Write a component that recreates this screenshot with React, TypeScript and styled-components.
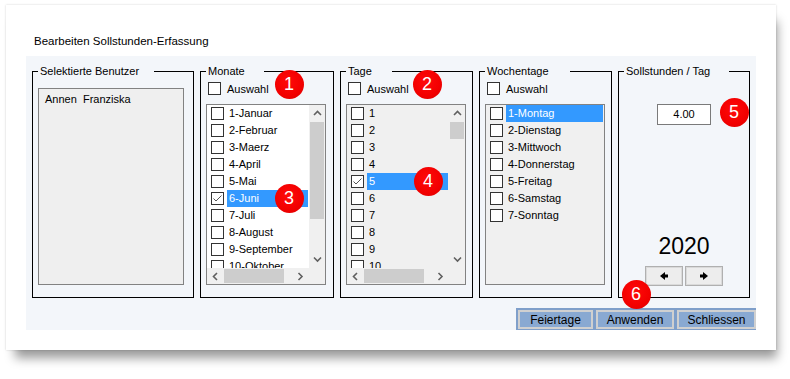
import React from "react";
import styled, { createGlobalStyle } from "styled-components";

const GlobalStyle = createGlobalStyle`
  body {
    margin: 0;
    background: #fff;
    font-family: "Liberation Sans", Arial, sans-serif;
    color: #000;
  }
`;

const Page = styled.div`
  width: 790px;
  height: 379px;
  padding: 5px 0 0 6px;
  box-sizing: border-box;
  overflow: hidden;
`;

const Card = styled.div`
  position: relative;
  width: 770px;
  height: 345px;
  background: #fff;
  box-sizing: border-box;
  padding: 29px 0 0 20px;
  box-shadow: 0 0 2px rgba(0, 0, 0, 0.18), 5px 12px 10px -4px rgba(0, 0, 0, 0.4);
`;

const Title = styled.div`
  font-size: 11.5px;
  line-height: 14px;
  height: 14px;
  padding-left: 8px;
  margin-bottom: 8px;
`;

const Panel = styled.div`
  width: 730px;
  height: 274px;
  background: #f3f6fa;
  box-sizing: border-box;
  padding: 8px 0 0 6px;
  display: flex;
  flex-direction: column;
`;

const Groups = styled.div`
  display: flex;
  gap: 6px;
  height: 234px;
`;

const Group = styled.fieldset<{ $w: number }>`
  width: ${(p) => p.$w}px;
  height: 234px;
  box-sizing: border-box;
  margin: 0;
  min-width: 0;
  padding: 0 5px;
  border: 1px solid #000;
  display: flex;
  flex-direction: column;
`;

const Legend = styled.legend<{ $gap: number }>`
  font-size: 11px;
  line-height: 14px;
  padding: 0 ${(p) => p.$gap}px 0 2px;
`;

const SelectRow = styled.label`
  display: flex;
  align-items: center;
  gap: 6px;
  height: 13px;
  margin: 4px 0 9px 2px;
  font-size: 11px;
`;

const Box = styled.span`
  width: 13px;
  height: 13px;
  flex: none;
  box-sizing: border-box;
  border: 1px solid #333;
  background: #fff;
  display: inline-flex;
  align-items: center;
  justify-content: center;
`;

const UserList = styled.div`
  margin-top: 10px;
  width: 146px;
  height: 197px;
  box-sizing: border-box;
  border: 1px solid #828282;
  background: #efefef;
  font-size: 11px;
  padding: 4px 6px;
  white-space: pre;
`;

const ListBox = styled.div<{ $bg: string; $scroll: boolean }>`
  width: 120px;
  height: 181px;
  box-sizing: border-box;
  border: 1px solid #828282;
  background: ${(p) => p.$bg};
  display: grid;
  grid-template-columns: ${(p) => (p.$scroll ? "1fr 16px" : "1fr")};
  grid-template-rows: ${(p) => (p.$scroll ? "1fr 16px" : "1fr")};
  overflow: hidden;
`;

const Items = styled.div`
  overflow: hidden;
  min-height: 0;
`;

const Row = styled.div`
  display: flex;
  align-items: center;
  height: 17px;
  padding-left: 4px;
  font-size: 11px;
`;

const ItemText = styled.span<{ $sel?: boolean }>`
  flex: 1;
  height: 17px;
  line-height: 17px;
  margin: 0 1px 0 3px;
  padding-left: 2px;
  white-space: nowrap;
  background: ${(p) => (p.$sel ? "#3399ff" : "transparent")};
  color: ${(p) => (p.$sel ? "#fff" : "#000")};
`;

const VBar = styled.div`
  background: #f0f0f0;
  display: flex;
  flex-direction: column;
`;

const HBar = styled.div`
  background: #f0f0f0;
  display: flex;
`;

const ArrowCell = styled.div`
  width: 16px;
  height: 17px;
  flex: none;
  display: flex;
  align-items: center;
  justify-content: center;
`;

const HArrowCell = styled(ArrowCell)`
  width: 17px;
  height: 16px;
`;

const Track = styled.div`
  flex: 1;
  display: flex;
  flex-direction: column;
`;

const HTrack = styled.div`
  flex: 1;
  display: flex;
`;

const Thumb = styled.div<{ $len: number }>`
  background: #cdcdcd;
  height: ${(p) => p.$len}px;
  margin: 0 1px;
`;

const HThumb = styled.div<{ $len: number }>`
  background: #cdcdcd;
  width: ${(p) => p.$len}px;
  margin: 1px 0;
`;

const Corner = styled.div`
  background: #f0f0f0;
`;

const HoursBody = styled.div`
  flex: 1;
  display: flex;
  flex-direction: column;
  align-items: center;
  padding-bottom: 11px;
`;

const HoursInput = styled.div`
  margin-top: 26px;
  width: 54px;
  height: 21px;
  box-sizing: border-box;
  border: 1px solid #7a7a7a;
  background: #fff;
  font-size: 11px;
  line-height: 19px;
  text-align: center;
`;

const Year = styled.div`
  margin-top: auto;
  font-size: 23px;
  line-height: 26px;
  margin-bottom: 7px;
`;

const StepRow = styled.div`
  display: flex;
  gap: 2px;
`;

const StepButton = styled.button`
  width: 38px;
  height: 20px;
  box-sizing: border-box;
  border: 1px solid #b0b0b0;
  box-shadow: inset 0 0 0 1px #dadada;
  background: #ededed;
  padding: 0;
  display: flex;
  align-items: center;
  justify-content: center;
`;

const Footer = styled.div`
  margin-top: 10px;
  align-self: flex-end;
  display: flex;
  gap: 3px;
  height: 22px;
  box-sizing: border-box;
  padding: 2px 0 1px 2px;
  background: #7f9fca;
`;

const ActionButton = styled.button<{ $w: number }>`
  width: ${(p) => p.$w}px;
  height: 19px;
  box-sizing: border-box;
  border: 2px solid #d0d0d0;
  background: #89a9d2;
  font-family: "Liberation Sans", Arial, sans-serif;
  font-size: 12px;
  color: #000;
  padding: 0;
`;

const Badge = styled.div<{ $x: number; $y: number }>`
  position: absolute;
  left: ${(p) => p.$x}px;
  top: ${(p) => p.$y}px;
  width: 29px;
  height: 29px;
  border-radius: 50%;
  background: radial-gradient(circle at 45% 40%, #ff0a0a 0%, #f20000 60%, #d80000 100%);
  color: #fff;
  font-size: 18px;
  line-height: 29px;
  text-align: center;
`;

const Check = () => (
  <svg width="11" height="11" viewBox="0 0 11 11">
    <polyline points="1.5,5.5 4,8 9.5,2.5" fill="none" stroke="#555" strokeWidth="1" />
  </svg>
);

const Chevron = ({ dir }: { dir: "up" | "down" | "left" | "right" }) => {
  const pts = {
    up: "1,5 4.5,1.5 8,5",
    down: "1,1.5 4.5,5 8,1.5",
    left: "5,1 1.5,4.5 5,8",
    right: "1.5,1 5,4.5 1.5,8",
  }[dir];
  const horiz = dir === "left" || dir === "right";
  return (
    <svg width={horiz ? 7 : 9} height={horiz ? 9 : 7} viewBox={horiz ? "0 0 7 9" : "0 0 9 7"}>
      <polyline points={pts} fill="none" stroke="#606060" strokeWidth="1.6" />
    </svg>
  );
};

const StepArrow = ({ left }: { left?: boolean }) => (
  <svg width="8" height="8" viewBox="0 0 8 8">
    <polygon
      points={left ? "0,4 5,0 5,2.5 8,2.5 8,5.5 5,5.5 5,8" : "8,4 3,0 3,2.5 0,2.5 0,5.5 3,5.5 3,8"}
      fill="#000"
    />
  </svg>
);

type Item = { label: string; checked?: boolean; sel?: boolean };

const CheckList = ({
  items,
  bg,
  scroll,
  vThumb,
  hThumb,
}: {
  items: Item[];
  bg: string;
  scroll?: boolean;
  vThumb?: number;
  hThumb?: number;
}) => (
  <ListBox $bg={bg} $scroll={!!scroll}>
    <Items>
      {items.map((it) => (
        <Row key={it.label}>
          <Box>{it.checked && <Check />}</Box>
          <ItemText $sel={it.sel}>{it.label}</ItemText>
        </Row>
      ))}
    </Items>
    {scroll && (
      <>
        <VBar>
          <ArrowCell>
            <Chevron dir="up" />
          </ArrowCell>
          <Track>
            <Thumb $len={vThumb ?? 20} />
          </Track>
          <ArrowCell>
            <Chevron dir="down" />
          </ArrowCell>
        </VBar>
        <HBar>
          <HArrowCell>
            <Chevron dir="left" />
          </HArrowCell>
          <HTrack>
            <HThumb $len={hThumb ?? 60} />
          </HTrack>
          <HArrowCell>
            <Chevron dir="right" />
          </HArrowCell>
        </HBar>
        <Corner />
      </>
    )}
  </ListBox>
);

const months: Item[] = [
  "1-Januar",
  "2-Februar",
  "3-Maerz",
  "4-April",
  "5-Mai",
  "6-Juni",
  "7-Juli",
  "8-August",
  "9-September",
  "10-Oktober",
].map((m) => ({ label: m, checked: m === "6-Juni", sel: m === "6-Juni" }));

const days: Item[] = Array.from({ length: 10 }, (_, i) => ({
  label: String(i + 1),
  checked: i === 4,
  sel: i === 4,
}));

const weekdays: Item[] = [
  "1-Montag",
  "2-Dienstag",
  "3-Mittwoch",
  "4-Donnerstag",
  "5-Freitag",
  "6-Samstag",
  "7-Sonntag",
].map((d, i) => ({ label: d, sel: i === 0 }));

export default function App() {
  return (
    <>
      <GlobalStyle />
      <Page>
        <Card>
          <Title>Bearbeiten Sollstunden-Erfassung</Title>
          <Panel>
            <Groups>
              <Group $w={162}>
                <Legend $gap={15}>Selektierte Benutzer</Legend>
                <UserList>Annen  Franziska</UserList>
              </Group>
              <Group $w={134}>
                <Legend $gap={19}>Monate</Legend>
                <SelectRow>
                  <Box />
                  Auswahl
                </SelectRow>
                <CheckList items={months} bg="#fff" scroll vThumb={97} hThumb={60} />
              </Group>
              <Group $w={133}>
                <Legend $gap={20}>Tage</Legend>
                <SelectRow>
                  <Box />
                  Auswahl
                </SelectRow>
                <CheckList items={days} bg="#f0f0f0" scroll vThumb={17} hThumb={60} />
              </Group>
              <Group $w={133}>
                <Legend $gap={21}>Wochentage</Legend>
                <SelectRow>
                  <Box />
                  Auswahl
                </SelectRow>
                <CheckList items={weekdays} bg="#f0f0f0" />
              </Group>
              <Group $w={132}>
                <Legend $gap={19}>Sollstunden / Tag</Legend>
                <HoursBody>
                  <HoursInput>4.00</HoursInput>
                  <Year>2020</Year>
                  <StepRow>
                    <StepButton>
                      <StepArrow left />
                    </StepButton>
                    <StepButton>
                      <StepArrow />
                    </StepButton>
                  </StepRow>
                </HoursBody>
              </Group>
            </Groups>
            <Footer>
              <ActionButton $w={75}>Feiertage</ActionButton>
              <ActionButton $w={78}>Anwenden</ActionButton>
              <ActionButton $w={79}>Schliessen</ActionButton>
            </Footer>
          </Panel>
          <Badge $x={268.5} $y={64.5}>1</Badge>
          <Badge $x={406.5} $y={64.5}>2</Badge>
          <Badge $x={268.5} $y={178.5}>3</Badge>
          <Badge $x={407.5} $y={161.5}>4</Badge>
          <Badge $x={713.5} $y={92.5}>5</Badge>
          <Badge $x={615.5} $y={274.5}>6</Badge>
        </Card>
      </Page>
    </>
  );
}
